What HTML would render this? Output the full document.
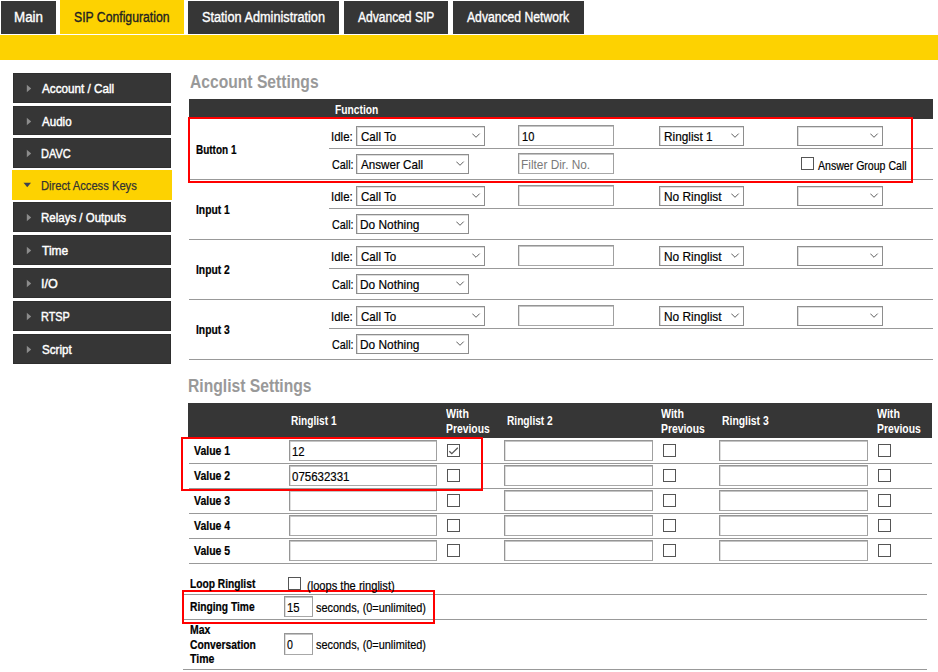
<!DOCTYPE html>
<html><head><meta charset="utf-8"><style>
html,body{margin:0;padding:0;background:#fff;width:938px;height:672px;overflow:hidden;position:relative;font-family:"Liberation Sans", sans-serif}
span{position:absolute;white-space:nowrap;line-height:normal;transform-origin:0 0}
</style></head><body>
<div style="position:absolute;left:1px;top:1px;width:55px;height:33px;background:#363636"></div>
<div style="position:absolute;left:60px;top:0px;width:124px;height:34px;background:#fdd201"></div>
<div style="position:absolute;left:188px;top:1px;width:151px;height:33px;background:#363636"></div>
<div style="position:absolute;left:344px;top:1px;width:104px;height:33px;background:#363636"></div>
<div style="position:absolute;left:453px;top:1px;width:131px;height:33px;background:#363636"></div>
<div style="position:absolute;left:0px;top:35px;width:938px;height:25px;background:#fdd201"></div>
<div style="position:absolute;left:13px;top:73px;width:158px;height:29.5px;background:#363636;box-shadow:inset 0 0 0 1px #2e2e2e"></div>
<svg style="position:absolute;left:26px;top:84.0px" width="6" height="9"><path d="M0.8 0.8 L5.2 4.5 L0.8 8.2 Z" fill="#8c8c8c"/></svg>
<div style="position:absolute;left:13px;top:106px;width:158px;height:28.80000000000001px;background:#363636;box-shadow:inset 0 0 0 1px #2e2e2e"></div>
<svg style="position:absolute;left:26px;top:117.0px" width="6" height="9"><path d="M0.8 0.8 L5.2 4.5 L0.8 8.2 Z" fill="#8c8c8c"/></svg>
<div style="position:absolute;left:13px;top:138px;width:158px;height:30px;background:#363636;box-shadow:inset 0 0 0 1px #2e2e2e"></div>
<svg style="position:absolute;left:26px;top:149.0px" width="6" height="9"><path d="M0.8 0.8 L5.2 4.5 L0.8 8.2 Z" fill="#8c8c8c"/></svg>
<div style="position:absolute;left:12px;top:170px;width:160px;height:30px;background:#fdd201"></div>
<svg style="position:absolute;left:23px;top:182px" width="9" height="6"><path d="M0.5 0.8 L8 0.8 L4.25 5.2 Z" fill="#3d4250"/></svg>
<div style="position:absolute;left:13px;top:202px;width:158px;height:30px;background:#363636;box-shadow:inset 0 0 0 1px #2e2e2e"></div>
<svg style="position:absolute;left:26px;top:213.0px" width="6" height="9"><path d="M0.8 0.8 L5.2 4.5 L0.8 8.2 Z" fill="#8c8c8c"/></svg>
<div style="position:absolute;left:13px;top:235px;width:158px;height:30px;background:#363636;box-shadow:inset 0 0 0 1px #2e2e2e"></div>
<svg style="position:absolute;left:26px;top:246.0px" width="6" height="9"><path d="M0.8 0.8 L5.2 4.5 L0.8 8.2 Z" fill="#8c8c8c"/></svg>
<div style="position:absolute;left:13px;top:268px;width:158px;height:30px;background:#363636;box-shadow:inset 0 0 0 1px #2e2e2e"></div>
<svg style="position:absolute;left:26px;top:279.0px" width="6" height="9"><path d="M0.8 0.8 L5.2 4.5 L0.8 8.2 Z" fill="#8c8c8c"/></svg>
<div style="position:absolute;left:13px;top:301px;width:158px;height:30px;background:#363636;box-shadow:inset 0 0 0 1px #2e2e2e"></div>
<svg style="position:absolute;left:26px;top:312.0px" width="6" height="9"><path d="M0.8 0.8 L5.2 4.5 L0.8 8.2 Z" fill="#8c8c8c"/></svg>
<div style="position:absolute;left:13px;top:334px;width:158px;height:29.80000000000001px;background:#363636;box-shadow:inset 0 0 0 1px #2e2e2e"></div>
<svg style="position:absolute;left:26px;top:345.0px" width="6" height="9"><path d="M0.8 0.8 L5.2 4.5 L0.8 8.2 Z" fill="#8c8c8c"/></svg>
<div style="position:absolute;left:189px;top:99px;width:744px;height:20px;background:#363636"></div>
<div style="position:absolute;left:356px;top:126px;width:129px;height:20px;box-sizing:border-box;border:1px solid #8e8e8e;background:#fff;box-shadow:inset 1px 1px 0 #dcdcdc"></div>
<svg style="position:absolute;left:472.2px;top:133.4px" width="9" height="6"><path d="M0.3 0.6 L4 4.3 L7.7 0.6" fill="none" stroke="#5e5e5e" stroke-width="1"/></svg>
<div style="position:absolute;left:518px;top:125px;width:96px;height:21px;box-sizing:border-box;border:1px solid #959595;border-bottom-color:#a8a8a8;border-right-color:#a0a0a0;background:#fff;box-shadow:inset 0 1px 0 #c4c4c4, inset 1px 0 0 #e0e0e0"></div>
<div style="position:absolute;left:659px;top:126px;width:85px;height:20px;box-sizing:border-box;border:1px solid #8e8e8e;background:#fff;box-shadow:inset 1px 1px 0 #dcdcdc"></div>
<svg style="position:absolute;left:731.2px;top:133.4px" width="9" height="6"><path d="M0.3 0.6 L4 4.3 L7.7 0.6" fill="none" stroke="#5e5e5e" stroke-width="1"/></svg>
<div style="position:absolute;left:797px;top:126px;width:86px;height:20px;box-sizing:border-box;border:1px solid #8e8e8e;background:#fff;box-shadow:inset 1px 1px 0 #dcdcdc"></div>
<svg style="position:absolute;left:870.2px;top:133.4px" width="9" height="6"><path d="M0.3 0.6 L4 4.3 L7.7 0.6" fill="none" stroke="#5e5e5e" stroke-width="1"/></svg>
<div style="position:absolute;left:329px;top:148px;width:604px;height:1px;background:#999999"></div>
<div style="position:absolute;left:356px;top:154px;width:113px;height:20px;box-sizing:border-box;border:1px solid #8e8e8e;background:#fff;box-shadow:inset 1px 1px 0 #dcdcdc"></div>
<svg style="position:absolute;left:456.2px;top:161.4px" width="9" height="6"><path d="M0.3 0.6 L4 4.3 L7.7 0.6" fill="none" stroke="#5e5e5e" stroke-width="1"/></svg>
<div style="position:absolute;left:518px;top:153px;width:96px;height:21px;box-sizing:border-box;border:1px solid #959595;border-bottom-color:#a8a8a8;border-right-color:#a0a0a0;background:#fff;box-shadow:inset 0 1px 0 #c4c4c4, inset 1px 0 0 #e0e0e0"></div>
<div style="position:absolute;left:801px;top:157px;width:13px;height:13px;box-sizing:border-box;border:1px solid #555;background:#fff"></div>
<div style="position:absolute;left:189px;top:179px;width:744px;height:1px;background:#999999"></div>
<div style="position:absolute;left:356px;top:186px;width:129px;height:20px;box-sizing:border-box;border:1px solid #8e8e8e;background:#fff;box-shadow:inset 1px 1px 0 #dcdcdc"></div>
<svg style="position:absolute;left:472.2px;top:193.4px" width="9" height="6"><path d="M0.3 0.6 L4 4.3 L7.7 0.6" fill="none" stroke="#5e5e5e" stroke-width="1"/></svg>
<div style="position:absolute;left:518px;top:185px;width:96px;height:21px;box-sizing:border-box;border:1px solid #959595;border-bottom-color:#a8a8a8;border-right-color:#a0a0a0;background:#fff;box-shadow:inset 0 1px 0 #c4c4c4, inset 1px 0 0 #e0e0e0"></div>
<div style="position:absolute;left:659px;top:186px;width:85px;height:20px;box-sizing:border-box;border:1px solid #8e8e8e;background:#fff;box-shadow:inset 1px 1px 0 #dcdcdc"></div>
<svg style="position:absolute;left:731.2px;top:193.4px" width="9" height="6"><path d="M0.3 0.6 L4 4.3 L7.7 0.6" fill="none" stroke="#5e5e5e" stroke-width="1"/></svg>
<div style="position:absolute;left:797px;top:186px;width:86px;height:20px;box-sizing:border-box;border:1px solid #8e8e8e;background:#fff;box-shadow:inset 1px 1px 0 #dcdcdc"></div>
<svg style="position:absolute;left:870.2px;top:193.4px" width="9" height="6"><path d="M0.3 0.6 L4 4.3 L7.7 0.6" fill="none" stroke="#5e5e5e" stroke-width="1"/></svg>
<div style="position:absolute;left:329px;top:208px;width:604px;height:1px;background:#999999"></div>
<div style="position:absolute;left:356px;top:214px;width:113px;height:20px;box-sizing:border-box;border:1px solid #8e8e8e;background:#fff;box-shadow:inset 1px 1px 0 #dcdcdc"></div>
<svg style="position:absolute;left:456.2px;top:221.4px" width="9" height="6"><path d="M0.3 0.6 L4 4.3 L7.7 0.6" fill="none" stroke="#5e5e5e" stroke-width="1"/></svg>
<div style="position:absolute;left:189px;top:239px;width:744px;height:1px;background:#999999"></div>
<div style="position:absolute;left:356px;top:246px;width:129px;height:20px;box-sizing:border-box;border:1px solid #8e8e8e;background:#fff;box-shadow:inset 1px 1px 0 #dcdcdc"></div>
<svg style="position:absolute;left:472.2px;top:253.4px" width="9" height="6"><path d="M0.3 0.6 L4 4.3 L7.7 0.6" fill="none" stroke="#5e5e5e" stroke-width="1"/></svg>
<div style="position:absolute;left:518px;top:245px;width:96px;height:21px;box-sizing:border-box;border:1px solid #959595;border-bottom-color:#a8a8a8;border-right-color:#a0a0a0;background:#fff;box-shadow:inset 0 1px 0 #c4c4c4, inset 1px 0 0 #e0e0e0"></div>
<div style="position:absolute;left:659px;top:246px;width:85px;height:20px;box-sizing:border-box;border:1px solid #8e8e8e;background:#fff;box-shadow:inset 1px 1px 0 #dcdcdc"></div>
<svg style="position:absolute;left:731.2px;top:253.4px" width="9" height="6"><path d="M0.3 0.6 L4 4.3 L7.7 0.6" fill="none" stroke="#5e5e5e" stroke-width="1"/></svg>
<div style="position:absolute;left:797px;top:246px;width:86px;height:20px;box-sizing:border-box;border:1px solid #8e8e8e;background:#fff;box-shadow:inset 1px 1px 0 #dcdcdc"></div>
<svg style="position:absolute;left:870.2px;top:253.4px" width="9" height="6"><path d="M0.3 0.6 L4 4.3 L7.7 0.6" fill="none" stroke="#5e5e5e" stroke-width="1"/></svg>
<div style="position:absolute;left:329px;top:268px;width:604px;height:1px;background:#999999"></div>
<div style="position:absolute;left:356px;top:274px;width:113px;height:20px;box-sizing:border-box;border:1px solid #8e8e8e;background:#fff;box-shadow:inset 1px 1px 0 #dcdcdc"></div>
<svg style="position:absolute;left:456.2px;top:281.4px" width="9" height="6"><path d="M0.3 0.6 L4 4.3 L7.7 0.6" fill="none" stroke="#5e5e5e" stroke-width="1"/></svg>
<div style="position:absolute;left:189px;top:299px;width:744px;height:1px;background:#999999"></div>
<div style="position:absolute;left:356px;top:306px;width:129px;height:20px;box-sizing:border-box;border:1px solid #8e8e8e;background:#fff;box-shadow:inset 1px 1px 0 #dcdcdc"></div>
<svg style="position:absolute;left:472.2px;top:313.4px" width="9" height="6"><path d="M0.3 0.6 L4 4.3 L7.7 0.6" fill="none" stroke="#5e5e5e" stroke-width="1"/></svg>
<div style="position:absolute;left:518px;top:305px;width:96px;height:21px;box-sizing:border-box;border:1px solid #959595;border-bottom-color:#a8a8a8;border-right-color:#a0a0a0;background:#fff;box-shadow:inset 0 1px 0 #c4c4c4, inset 1px 0 0 #e0e0e0"></div>
<div style="position:absolute;left:659px;top:306px;width:85px;height:20px;box-sizing:border-box;border:1px solid #8e8e8e;background:#fff;box-shadow:inset 1px 1px 0 #dcdcdc"></div>
<svg style="position:absolute;left:731.2px;top:313.4px" width="9" height="6"><path d="M0.3 0.6 L4 4.3 L7.7 0.6" fill="none" stroke="#5e5e5e" stroke-width="1"/></svg>
<div style="position:absolute;left:797px;top:306px;width:86px;height:20px;box-sizing:border-box;border:1px solid #8e8e8e;background:#fff;box-shadow:inset 1px 1px 0 #dcdcdc"></div>
<svg style="position:absolute;left:870.2px;top:313.4px" width="9" height="6"><path d="M0.3 0.6 L4 4.3 L7.7 0.6" fill="none" stroke="#5e5e5e" stroke-width="1"/></svg>
<div style="position:absolute;left:329px;top:328px;width:604px;height:1px;background:#999999"></div>
<div style="position:absolute;left:356px;top:334px;width:113px;height:20px;box-sizing:border-box;border:1px solid #8e8e8e;background:#fff;box-shadow:inset 1px 1px 0 #dcdcdc"></div>
<svg style="position:absolute;left:456.2px;top:341.4px" width="9" height="6"><path d="M0.3 0.6 L4 4.3 L7.7 0.6" fill="none" stroke="#5e5e5e" stroke-width="1"/></svg>
<div style="position:absolute;left:189px;top:359px;width:744px;height:1px;background:#999999"></div>
<div style="position:absolute;left:188px;top:403px;width:744px;height:35px;background:#363636"></div>
<div style="position:absolute;left:289px;top:440px;width:148px;height:21px;box-sizing:border-box;border:1px solid #959595;border-bottom-color:#a8a8a8;border-right-color:#a0a0a0;background:#fff;box-shadow:inset 0 1px 0 #c4c4c4, inset 1px 0 0 #e0e0e0"></div>
<div style="position:absolute;left:504px;top:440px;width:149px;height:21px;box-sizing:border-box;border:1px solid #959595;border-bottom-color:#a8a8a8;border-right-color:#a0a0a0;background:#fff;box-shadow:inset 0 1px 0 #c4c4c4, inset 1px 0 0 #e0e0e0"></div>
<div style="position:absolute;left:719px;top:440px;width:149px;height:21px;box-sizing:border-box;border:1px solid #959595;border-bottom-color:#a8a8a8;border-right-color:#a0a0a0;background:#fff;box-shadow:inset 0 1px 0 #c4c4c4, inset 1px 0 0 #e0e0e0"></div>
<div style="position:absolute;left:447px;top:444px;width:13px;height:13px;box-sizing:border-box;border:1px solid #555;background:#fff"></div>
<svg style="position:absolute;left:447px;top:444px" width="13" height="13"><path d="M2.3 7.2 L4.8 9.6 L10.8 3.8" fill="none" stroke="#555" stroke-width="1.3"/></svg>
<div style="position:absolute;left:663px;top:444px;width:13px;height:13px;box-sizing:border-box;border:1px solid #555;background:#fff"></div>
<div style="position:absolute;left:878px;top:444px;width:13px;height:13px;box-sizing:border-box;border:1px solid #555;background:#fff"></div>
<div style="position:absolute;left:189px;top:463px;width:743px;height:1px;background:#999999"></div>
<div style="position:absolute;left:289px;top:465px;width:148px;height:21px;box-sizing:border-box;border:1px solid #959595;border-bottom-color:#a8a8a8;border-right-color:#a0a0a0;background:#fff;box-shadow:inset 0 1px 0 #c4c4c4, inset 1px 0 0 #e0e0e0"></div>
<div style="position:absolute;left:504px;top:465px;width:149px;height:21px;box-sizing:border-box;border:1px solid #959595;border-bottom-color:#a8a8a8;border-right-color:#a0a0a0;background:#fff;box-shadow:inset 0 1px 0 #c4c4c4, inset 1px 0 0 #e0e0e0"></div>
<div style="position:absolute;left:719px;top:465px;width:149px;height:21px;box-sizing:border-box;border:1px solid #959595;border-bottom-color:#a8a8a8;border-right-color:#a0a0a0;background:#fff;box-shadow:inset 0 1px 0 #c4c4c4, inset 1px 0 0 #e0e0e0"></div>
<div style="position:absolute;left:447px;top:469px;width:13px;height:13px;box-sizing:border-box;border:1px solid #555;background:#fff"></div>
<div style="position:absolute;left:663px;top:469px;width:13px;height:13px;box-sizing:border-box;border:1px solid #555;background:#fff"></div>
<div style="position:absolute;left:878px;top:469px;width:13px;height:13px;box-sizing:border-box;border:1px solid #555;background:#fff"></div>
<div style="position:absolute;left:189px;top:488px;width:743px;height:1px;background:#999999"></div>
<div style="position:absolute;left:289px;top:490px;width:148px;height:21px;box-sizing:border-box;border:1px solid #959595;border-bottom-color:#a8a8a8;border-right-color:#a0a0a0;background:#fff;box-shadow:inset 0 1px 0 #c4c4c4, inset 1px 0 0 #e0e0e0"></div>
<div style="position:absolute;left:504px;top:490px;width:149px;height:21px;box-sizing:border-box;border:1px solid #959595;border-bottom-color:#a8a8a8;border-right-color:#a0a0a0;background:#fff;box-shadow:inset 0 1px 0 #c4c4c4, inset 1px 0 0 #e0e0e0"></div>
<div style="position:absolute;left:719px;top:490px;width:149px;height:21px;box-sizing:border-box;border:1px solid #959595;border-bottom-color:#a8a8a8;border-right-color:#a0a0a0;background:#fff;box-shadow:inset 0 1px 0 #c4c4c4, inset 1px 0 0 #e0e0e0"></div>
<div style="position:absolute;left:447px;top:494px;width:13px;height:13px;box-sizing:border-box;border:1px solid #555;background:#fff"></div>
<div style="position:absolute;left:663px;top:494px;width:13px;height:13px;box-sizing:border-box;border:1px solid #555;background:#fff"></div>
<div style="position:absolute;left:878px;top:494px;width:13px;height:13px;box-sizing:border-box;border:1px solid #555;background:#fff"></div>
<div style="position:absolute;left:189px;top:513px;width:743px;height:1px;background:#999999"></div>
<div style="position:absolute;left:289px;top:515px;width:148px;height:21px;box-sizing:border-box;border:1px solid #959595;border-bottom-color:#a8a8a8;border-right-color:#a0a0a0;background:#fff;box-shadow:inset 0 1px 0 #c4c4c4, inset 1px 0 0 #e0e0e0"></div>
<div style="position:absolute;left:504px;top:515px;width:149px;height:21px;box-sizing:border-box;border:1px solid #959595;border-bottom-color:#a8a8a8;border-right-color:#a0a0a0;background:#fff;box-shadow:inset 0 1px 0 #c4c4c4, inset 1px 0 0 #e0e0e0"></div>
<div style="position:absolute;left:719px;top:515px;width:149px;height:21px;box-sizing:border-box;border:1px solid #959595;border-bottom-color:#a8a8a8;border-right-color:#a0a0a0;background:#fff;box-shadow:inset 0 1px 0 #c4c4c4, inset 1px 0 0 #e0e0e0"></div>
<div style="position:absolute;left:447px;top:519px;width:13px;height:13px;box-sizing:border-box;border:1px solid #555;background:#fff"></div>
<div style="position:absolute;left:663px;top:519px;width:13px;height:13px;box-sizing:border-box;border:1px solid #555;background:#fff"></div>
<div style="position:absolute;left:878px;top:519px;width:13px;height:13px;box-sizing:border-box;border:1px solid #555;background:#fff"></div>
<div style="position:absolute;left:189px;top:538px;width:743px;height:1px;background:#999999"></div>
<div style="position:absolute;left:289px;top:540px;width:148px;height:21px;box-sizing:border-box;border:1px solid #959595;border-bottom-color:#a8a8a8;border-right-color:#a0a0a0;background:#fff;box-shadow:inset 0 1px 0 #c4c4c4, inset 1px 0 0 #e0e0e0"></div>
<div style="position:absolute;left:504px;top:540px;width:149px;height:21px;box-sizing:border-box;border:1px solid #959595;border-bottom-color:#a8a8a8;border-right-color:#a0a0a0;background:#fff;box-shadow:inset 0 1px 0 #c4c4c4, inset 1px 0 0 #e0e0e0"></div>
<div style="position:absolute;left:719px;top:540px;width:149px;height:21px;box-sizing:border-box;border:1px solid #959595;border-bottom-color:#a8a8a8;border-right-color:#a0a0a0;background:#fff;box-shadow:inset 0 1px 0 #c4c4c4, inset 1px 0 0 #e0e0e0"></div>
<div style="position:absolute;left:447px;top:544px;width:13px;height:13px;box-sizing:border-box;border:1px solid #555;background:#fff"></div>
<div style="position:absolute;left:663px;top:544px;width:13px;height:13px;box-sizing:border-box;border:1px solid #555;background:#fff"></div>
<div style="position:absolute;left:878px;top:544px;width:13px;height:13px;box-sizing:border-box;border:1px solid #555;background:#fff"></div>
<div style="position:absolute;left:189px;top:563px;width:743px;height:1px;background:#999999"></div>
<div style="position:absolute;left:288px;top:577px;width:13px;height:13px;box-sizing:border-box;border:1px solid #555;background:#fff"></div>
<div style="position:absolute;left:183px;top:594px;width:744px;height:1px;background:#999999"></div>
<div style="position:absolute;left:284px;top:596px;width:29px;height:21px;box-sizing:border-box;border:1px solid #959595;border-bottom-color:#a8a8a8;border-right-color:#a0a0a0;background:#fff;box-shadow:inset 0 1px 0 #c4c4c4, inset 1px 0 0 #e0e0e0"></div>
<div style="position:absolute;left:183px;top:619px;width:744px;height:1px;background:#999999"></div>
<div style="position:absolute;left:284px;top:633px;width:29px;height:22px;box-sizing:border-box;border:1px solid #959595;border-bottom-color:#a8a8a8;border-right-color:#a0a0a0;background:#fff;box-shadow:inset 0 1px 0 #c4c4c4, inset 1px 0 0 #e0e0e0"></div>
<div style="position:absolute;left:183px;top:669px;width:744px;height:1px;background:#999999"></div>
<div style="position:absolute;left:188px;top:117px;width:725px;height:66px;box-sizing:border-box;border:2.2px solid #ff0000"></div>
<div style="position:absolute;left:181px;top:437px;width:302px;height:54px;box-sizing:border-box;border:2.2px solid #ff0000"></div>
<div style="position:absolute;left:182px;top:590px;width:253px;height:33.5px;box-sizing:border-box;border:2.2px solid #ff0000"></div>
<span style="left:14.04px;top:9.33px;font-size:14px;font-weight:400;color:#fff;transform:scaleX(0.9559);-webkit-text-stroke:0.35px #fff">Main</span>
<span style="left:74.40px;top:9.33px;font-size:14px;font-weight:400;color:#222;transform:scaleX(0.8720);-webkit-text-stroke:0.35px #222">SIP Configuration</span>
<span style="left:201.70px;top:9.33px;font-size:14px;font-weight:400;color:#fff;transform:scaleX(0.9085);-webkit-text-stroke:0.35px #fff">Station Administration</span>
<span style="left:358.00px;top:9.33px;font-size:14px;font-weight:400;color:#fff;transform:scaleX(0.8599);-webkit-text-stroke:0.35px #fff">Advanced SIP</span>
<span style="left:467.00px;top:9.33px;font-size:14px;font-weight:400;color:#fff;transform:scaleX(0.8692);-webkit-text-stroke:0.35px #fff">Advanced Network</span>
<span style="left:42.30px;top:81.03px;font-size:13px;font-weight:400;color:#fff;transform:scaleX(0.8990);-webkit-text-stroke:0.45px #fff">Account / Call</span>
<span style="left:42.30px;top:114.03px;font-size:13px;font-weight:400;color:#fff;transform:scaleX(0.8904);-webkit-text-stroke:0.45px #fff">Audio</span>
<span style="left:41.45px;top:146.04px;font-size:13px;font-weight:400;color:#fff;transform:scaleX(0.8470);-webkit-text-stroke:0.45px #fff">DAVC</span>
<span style="left:40.74px;top:177.94px;font-size:13px;font-weight:400;color:#333;transform:scaleX(0.8612);-webkit-text-stroke:0.25px #333">Direct Access Keys</span>
<span style="left:41.42px;top:210.04px;font-size:13px;font-weight:400;color:#fff;transform:scaleX(0.8839);-webkit-text-stroke:0.45px #fff">Relays / Outputs</span>
<span style="left:42.30px;top:243.04px;font-size:13px;font-weight:400;color:#fff;transform:scaleX(0.9228);-webkit-text-stroke:0.45px #fff">Time</span>
<span style="left:41.33px;top:276.04px;font-size:13px;font-weight:400;color:#fff;transform:scaleX(0.9677);-webkit-text-stroke:0.45px #fff">I/O</span>
<span style="left:41.46px;top:309.04px;font-size:13px;font-weight:400;color:#fff;transform:scaleX(0.8363);-webkit-text-stroke:0.45px #fff">RTSP</span>
<span style="left:42.30px;top:342.04px;font-size:13px;font-weight:400;color:#fff;transform:scaleX(0.8924);-webkit-text-stroke:0.45px #fff">Script</span>
<span style="left:189.70px;top:72.01px;font-size:18px;font-weight:700;color:#999;transform:scaleX(0.8689)">Account Settings</span>
<span style="left:334.70px;top:102.74px;font-size:12px;font-weight:700;color:#fff;transform:scaleX(0.8545)">Function</span>
<span style="left:195.70px;top:142.64px;font-size:12px;font-weight:700;color:#000;transform:scaleX(0.8309);-webkit-text-stroke:0.2px #000">Button 1</span>
<span style="left:331.42px;top:129.24px;font-size:13px;font-weight:400;color:#000;transform:scaleX(0.8841);-webkit-text-stroke:0.2px #000">Idle:</span>
<span style="left:360.90px;top:129.24px;font-size:13px;font-weight:400;color:#000;transform:scaleX(0.8910);-webkit-text-stroke:0.2px #000">Call To</span>
<span style="left:521.60px;top:129.24px;font-size:13px;font-weight:400;color:#000;transform:scaleX(0.8503);-webkit-text-stroke:0.2px #000">10</span>
<span style="left:663.99px;top:129.24px;font-size:13px;font-weight:400;color:#000;transform:scaleX(0.9074);-webkit-text-stroke:0.2px #000">Ringlist 1</span>
<span style="left:332.30px;top:157.24px;font-size:13px;font-weight:400;color:#000;transform:scaleX(0.8269);-webkit-text-stroke:0.2px #000">Call:</span>
<span style="left:361.10px;top:157.24px;font-size:13px;font-weight:400;color:#000;transform:scaleX(0.8954);-webkit-text-stroke:0.2px #000">Answer Call</span>
<span style="left:520.59px;top:157.13px;font-size:13px;font-weight:400;color:#7a7a7a;transform:scaleX(0.9120)">Filter Dir. No.</span>
<span style="left:818.00px;top:158.74px;font-size:12px;font-weight:400;color:#000;transform:scaleX(0.8797);-webkit-text-stroke:0.2px #000">Answer Group Call</span>
<span style="left:195.70px;top:203.14px;font-size:12px;font-weight:700;color:#000;transform:scaleX(0.8574);-webkit-text-stroke:0.2px #000">Input 1</span>
<span style="left:331.42px;top:189.24px;font-size:13px;font-weight:400;color:#000;transform:scaleX(0.8841);-webkit-text-stroke:0.2px #000">Idle:</span>
<span style="left:360.90px;top:189.24px;font-size:13px;font-weight:400;color:#000;transform:scaleX(0.8910);-webkit-text-stroke:0.2px #000">Call To</span>
<span style="left:663.98px;top:189.24px;font-size:13px;font-weight:400;color:#000;transform:scaleX(0.9158);-webkit-text-stroke:0.2px #000">No Ringlist</span>
<span style="left:332.30px;top:217.24px;font-size:13px;font-weight:400;color:#000;transform:scaleX(0.8269);-webkit-text-stroke:0.2px #000">Call:</span>
<span style="left:360.19px;top:217.24px;font-size:13px;font-weight:400;color:#000;transform:scaleX(0.9137);-webkit-text-stroke:0.2px #000">Do Nothing</span>
<span style="left:195.70px;top:263.14px;font-size:12px;font-weight:700;color:#000;transform:scaleX(0.8574);-webkit-text-stroke:0.2px #000">Input 2</span>
<span style="left:331.42px;top:249.24px;font-size:13px;font-weight:400;color:#000;transform:scaleX(0.8841);-webkit-text-stroke:0.2px #000">Idle:</span>
<span style="left:360.90px;top:249.24px;font-size:13px;font-weight:400;color:#000;transform:scaleX(0.8910);-webkit-text-stroke:0.2px #000">Call To</span>
<span style="left:663.98px;top:249.24px;font-size:13px;font-weight:400;color:#000;transform:scaleX(0.9158);-webkit-text-stroke:0.2px #000">No Ringlist</span>
<span style="left:332.30px;top:277.24px;font-size:13px;font-weight:400;color:#000;transform:scaleX(0.8269);-webkit-text-stroke:0.2px #000">Call:</span>
<span style="left:360.19px;top:277.24px;font-size:13px;font-weight:400;color:#000;transform:scaleX(0.9137);-webkit-text-stroke:0.2px #000">Do Nothing</span>
<span style="left:195.70px;top:323.14px;font-size:12px;font-weight:700;color:#000;transform:scaleX(0.8574);-webkit-text-stroke:0.2px #000">Input 3</span>
<span style="left:331.42px;top:309.24px;font-size:13px;font-weight:400;color:#000;transform:scaleX(0.8841);-webkit-text-stroke:0.2px #000">Idle:</span>
<span style="left:360.90px;top:309.24px;font-size:13px;font-weight:400;color:#000;transform:scaleX(0.8910);-webkit-text-stroke:0.2px #000">Call To</span>
<span style="left:663.98px;top:309.24px;font-size:13px;font-weight:400;color:#000;transform:scaleX(0.9158);-webkit-text-stroke:0.2px #000">No Ringlist</span>
<span style="left:332.30px;top:337.24px;font-size:13px;font-weight:400;color:#000;transform:scaleX(0.8269);-webkit-text-stroke:0.2px #000">Call:</span>
<span style="left:360.19px;top:337.24px;font-size:13px;font-weight:400;color:#000;transform:scaleX(0.9137);-webkit-text-stroke:0.2px #000">Do Nothing</span>
<span style="left:188.03px;top:376.01px;font-size:18px;font-weight:700;color:#999;transform:scaleX(0.8702)">Ringlist Settings</span>
<span style="left:291.00px;top:414.14px;font-size:12px;font-weight:700;color:#fff;transform:scaleX(0.8430)">Ringlist 1</span>
<span style="left:506.50px;top:414.14px;font-size:12px;font-weight:700;color:#fff;transform:scaleX(0.8466)">Ringlist 2</span>
<span style="left:722.00px;top:414.14px;font-size:12px;font-weight:700;color:#fff;transform:scaleX(0.8651)">Ringlist 3</span>
<span style="left:445.70px;top:407.04px;font-size:12px;font-weight:700;color:#fff;transform:scaleX(0.8845)">With</span>
<span style="left:445.70px;top:422.04px;font-size:12px;font-weight:700;color:#fff;transform:scaleX(0.8625)">Previous</span>
<span style="left:661.10px;top:407.04px;font-size:12px;font-weight:700;color:#fff;transform:scaleX(0.8845)">With</span>
<span style="left:661.10px;top:422.04px;font-size:12px;font-weight:700;color:#fff;transform:scaleX(0.8625)">Previous</span>
<span style="left:876.90px;top:407.04px;font-size:12px;font-weight:700;color:#fff;transform:scaleX(0.8845)">With</span>
<span style="left:876.90px;top:422.04px;font-size:12px;font-weight:700;color:#fff;transform:scaleX(0.8625)">Previous</span>
<span style="left:194.30px;top:444.14px;font-size:12px;font-weight:700;color:#000;transform:scaleX(0.8732);-webkit-text-stroke:0.2px #000">Value 1</span>
<span style="left:194.30px;top:469.14px;font-size:12px;font-weight:700;color:#000;transform:scaleX(0.8732);-webkit-text-stroke:0.2px #000">Value 2</span>
<span style="left:194.30px;top:494.14px;font-size:12px;font-weight:700;color:#000;transform:scaleX(0.8732);-webkit-text-stroke:0.2px #000">Value 3</span>
<span style="left:194.30px;top:519.14px;font-size:12px;font-weight:700;color:#000;transform:scaleX(0.8732);-webkit-text-stroke:0.2px #000">Value 4</span>
<span style="left:194.30px;top:544.14px;font-size:12px;font-weight:700;color:#000;transform:scaleX(0.8732);-webkit-text-stroke:0.2px #000">Value 5</span>
<span style="left:291.90px;top:444.24px;font-size:13px;font-weight:400;color:#000;transform:scaleX(0.8714);-webkit-text-stroke:0.2px #000">12</span>
<span style="left:291.80px;top:469.04px;font-size:13px;font-weight:400;color:#000;transform:scaleX(0.8837);-webkit-text-stroke:0.2px #000">075632331</span>
<span style="left:189.70px;top:577.04px;font-size:12px;font-weight:700;color:#000;transform:scaleX(0.8519);-webkit-text-stroke:0.2px #000">Loop Ringlist</span>
<span style="left:306.90px;top:577.53px;font-size:13px;font-weight:400;color:#000;transform:scaleX(0.8546);-webkit-text-stroke:0.2px #000">(loops the ringlist)</span>
<span style="left:189.70px;top:599.84px;font-size:12px;font-weight:700;color:#000;transform:scaleX(0.8528);-webkit-text-stroke:0.2px #000">Ringing Time</span>
<span style="left:286.90px;top:599.63px;font-size:13px;font-weight:400;color:#000;transform:scaleX(0.8714);-webkit-text-stroke:0.2px #000">15</span>
<span style="left:315.70px;top:599.63px;font-size:13px;font-weight:400;color:#000;transform:scaleX(0.8386);-webkit-text-stroke:0.2px #000">seconds, (0=unlimited)</span>
<span style="left:189.70px;top:622.74px;font-size:12px;font-weight:700;color:#000;transform:scaleX(0.8703);-webkit-text-stroke:0.2px #000">Max</span>
<span style="left:189.70px;top:637.74px;font-size:12px;font-weight:700;color:#000;transform:scaleX(0.8592);-webkit-text-stroke:0.2px #000">Conversation</span>
<span style="left:189.70px;top:652.14px;font-size:12px;font-weight:700;color:#000;transform:scaleX(0.8749);-webkit-text-stroke:0.2px #000">Time</span>
<span style="left:286.90px;top:637.03px;font-size:13px;font-weight:400;color:#000;transform:scaleX(0.8143);-webkit-text-stroke:0.2px #000">0</span>
<span style="left:315.70px;top:637.03px;font-size:13px;font-weight:400;color:#000;transform:scaleX(0.8386);-webkit-text-stroke:0.2px #000">seconds, (0=unlimited)</span>
</body></html>
